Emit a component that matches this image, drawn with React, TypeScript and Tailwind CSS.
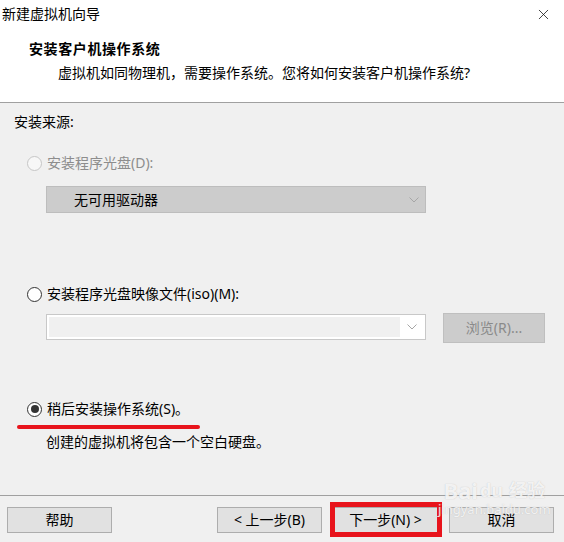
import { X } from 'lucide-react';

function Chevron({ color = '#a6a6a6' }: { color?: string }) {
  return (
    <svg width="10" height="6" viewBox="0 0 10 6" fill="none">
      <path d="M0.5 0.5 L5 5 L9.5 0.5" stroke={color} strokeWidth="1" />
    </svg>
  );
}

function Radio({ state }: { state: 'disabled' | 'off' | 'on' }) {
  if (state === 'disabled') {
    return <div className="h-[15px] w-[15px] rounded-full border border-[#c6c6c6] bg-[#f7f7f7]" />;
  }
  return (
    <div className="flex h-[15px] w-[15px] items-center justify-center rounded-full border border-[#333333] bg-white">
      {state === 'on' && <div className="h-[8px] w-[8px] rounded-full bg-[#333333]" />}
    </div>
  );
}

function Button({ label, className = '' }: { label: string; className?: string }) {
  return (
    <div
      className={
        'flex h-[26px] w-[105px] items-center justify-center border border-[#adadad] bg-[#e1e1e1] text-[14px] leading-[20px] text-black ' +
        className
      }
    >
      {label}
    </div>
  );
}

export default function App() {
  return (
    <div className="relative flex h-[542px] w-[564px] flex-col overflow-hidden bg-[#f0f0f0] font-['Noto_Sans','Noto_Sans_CJK_SC',sans-serif] text-[14px] leading-[20px] text-black">
      {/* Header */}
      <div className="h-[103px] shrink-0 border-b border-[#a0a0a0] bg-white">
        <div className="flex items-center justify-between pl-[2px] pr-[12px] pt-[4px]">
          <span>新建虚拟机向导</span>
          <X className="h-[17px] w-[17px]" strokeWidth={1.1} color="#111" />
        </div>
        <div className="mt-[15px] pl-[29px] font-bold tracking-[0.6px]">安装客户机操作系统</div>
        <div className="mt-[4px] pl-[58px]">虚拟机如同物理机，需要操作系统。您将如何安装客户机操作系统?</div>
      </div>

      {/* Body */}
      <div className="flex-1 pl-[14px] pt-[9px]">
        <div>安装来源:</div>

        <div className="mt-[21px] flex items-center gap-[5px] pl-[13px] text-[#8d8d8d]">
          <Radio state="disabled" />
          <span>安装程序光盘(D):</span>
        </div>
        <div className="ml-[32px] mt-[13px] flex h-[27px] w-[380px] items-center justify-between border border-[#bdbdbd] bg-[#cccccc] pl-[27px] pr-[6px]">
          <span>无可用驱动器</span>
          <Chevron />
        </div>

        <div className="mt-[71px] flex items-center gap-[5px] pl-[13px]">
          <Radio state="off" />
          <span>安装程序光盘映像文件(iso)(M):</span>
        </div>
        <div className="ml-[32px] mt-[9px] flex items-start gap-[17px]">
          <div className="mt-[1px] flex h-[26px] w-[380px] items-center border border-[#c8c8c8] bg-white p-[2px]">
            <div className="h-full flex-1 bg-[#f0f0f0]" />
            <div className="flex w-[23px] justify-center">
              <Chevron />
            </div>
          </div>
          <div className="flex h-[30px] w-[102px] items-center justify-center border border-[#bfbfbf] bg-[#cccccc] text-[#8a8a8a]">
            浏览(R)...
          </div>
        </div>

        <div className="relative mt-[56px] flex items-center gap-[5px] pl-[13px]">
          <Radio state="on" />
          <span>稍后安装操作系统(S)。</span>
          <div className="absolute left-[3px] top-[26px] h-[4px] w-[183px] rounded-full bg-[#e8141c]" />
        </div>
        <div className="mt-[13px] pl-[32px]">创建的虚拟机将包含一个空白硬盘。</div>
      </div>

      {/* Footer */}
      <div className="flex h-[47px] shrink-0 items-start border-t border-[#a0a0a0] pl-[7px] pr-[10px] pt-[11px]">
        <Button label="帮助" />
        <div className="ml-auto flex gap-[11px]">
          <Button label="< 上一步(B)" />
          <div className="relative">
            <Button label="下一步(N) >" className="border-[#0078d7]" />
            <div className="absolute left-[-3px] top-[-5px] h-[35px] w-[112px] border-[5px] border-[#e8141c]" />
          </div>
          <Button label="取消" />
        </div>
      </div>

      {/* Watermark */}
      <div className="pointer-events-none absolute left-[438px] top-[478px] flex flex-col items-center text-white/80 [text-shadow:0_0_1px_rgba(150,150,150,0.6)]">
        <div className="flex items-end gap-[2px] text-[22px] font-bold leading-[24px]">
          <span>Bai</span>
          <span className="text-[18px]">du</span>
          <span className="ml-[4px] text-[18px]">经验</span>
        </div>
        <div className="text-[13px] leading-[14px]">jingyan.baidu.com</div>
      </div>
    </div>
  );
}
